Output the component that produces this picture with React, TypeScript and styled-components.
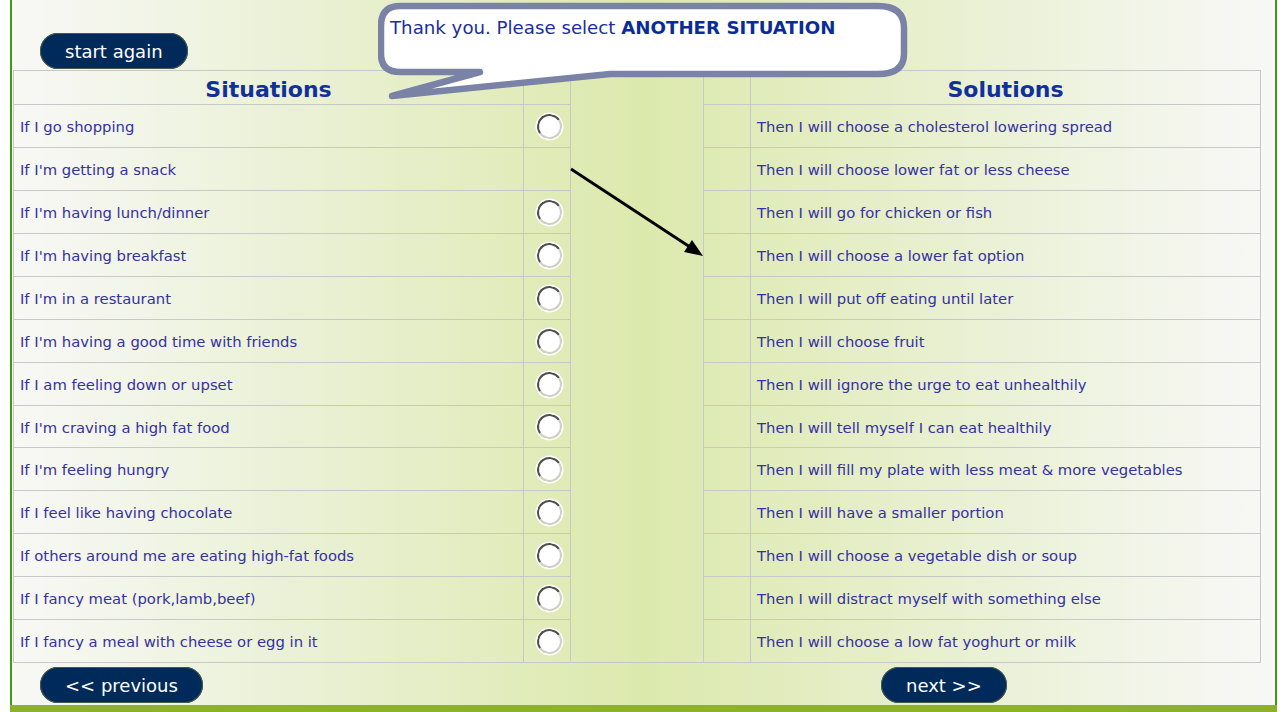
import React from "react";
import styled, { createGlobalStyle } from "styled-components";

const GlobalStyle = createGlobalStyle`
  html, body { margin: 0; padding: 0; background: #ffffff; }
  body { font-family: "DejaVu Sans", Verdana, sans-serif; }
`;

const Page = styled.div`
  width: 1267px;
  margin-left: 10px;
`;

const Frame = styled.div`
  position: relative;
  box-sizing: border-box;
  border-left: 2px solid #3d9a12;
  border-right: 2px solid #3d9a12;
  background: linear-gradient(to right, #f8f8f6 0%, #e9f0d2 25%, #dce9ad 50%, #e9f0d2 75%, #f8f8f7 100%);
  padding-top: 33px;
  height: 705px;
`;

const BottomBar = styled.div`
  height: 12px;
  background: #8db12a;
`;

const PillButton = styled.button`
  height: 36px;
  border: none;
  border-radius: 18px;
  background: #002a5a;
  color: #ffffff;
  font-family: "DejaVu Sans", Verdana, sans-serif;
  font-size: 18px;
  padding: 0 25px;
  cursor: pointer;
  box-shadow: 0 0 0 1px #4a5a4a inset;
  white-space: nowrap;
`;

const TopBar = styled.div`
  padding-left: 28px;
  height: 36px;
`;

const Grid = styled.div`
  margin-left: 1px;
  margin-top: 1px;
  display: grid;
  grid-template-columns: 510px 47px 133px 47px 510px;
  grid-template-rows: 34px repeat(7, 43px) 42px repeat(5, 43px);
  width: 1248px;
  box-sizing: border-box;
  border-top: 1px solid #c8c8c8;
  border-left: 1px solid #c8c8c8;
`;

const Cell = styled.div`
  box-sizing: border-box;
  border-right: 1px solid #c8c8c8;
  border-bottom: 1px solid #c8c8c8;
  display: flex;
  align-items: center;
`;

const HeadCell = styled(Cell)`
  justify-content: center;
  font-weight: bold;
  font-size: 22px;
  color: #10309c;
  padding-top: 3px;
`;

const TextCell = styled(Cell)`
  padding-left: 6px;
  padding-top: 1px;
  font-size: 14.8px;
  color: #3431a2;
  white-space: nowrap;
`;

const RadioCell = styled(Cell)`
  justify-content: center;
  padding-left: 4px;
`;

const Middle = styled.div`
  grid-column: 3;
  grid-row: 1 / -1;
  position: relative;
  box-sizing: border-box;
  border-right: 1px solid #c8c8c8;
  border-bottom: 1px solid #c8c8c8;
`;

const ArrowSvg = styled.svg`
  position: absolute;
  left: 0;
  top: 0;
  overflow: visible;
`;

const Radio = styled.span`
  display: block;
  width: 25px;
  height: 25px;
  box-sizing: border-box;
  border-radius: 50%;
  background: #ffffff;
  border: 2.5px solid;
  border-color: #4f4f4f #d2cfc6 #d2cfc6 #4f4f4f;
  transform: rotate(10deg);
  box-shadow: 0 0 0 1.5px #ffffff;
`;

const Footer = styled.div`
  display: grid;
  grid-template-columns: 869px auto;
  margin-top: 4px;
`;

const FooterLeft = styled.div`
  padding-left: 28px;
`;

const Bubble = styled.div`
  position: absolute;
  left: 366px;
  top: 0;
  width: 535px;
  height: 100px;
`;

const BubbleSvg = styled.svg`
  position: absolute;
  left: 0;
  top: 0;
`;

const BubbleText = styled.div`
  position: relative;
  padding: 17px 0 0 12px;
  font-size: 18.2px;
  color: #1a2e9c;
  white-space: nowrap;
  b { color: #0b2c98; }
`;

const situations = [
  "If I go shopping",
  "If I'm getting a snack",
  "If I'm having lunch/dinner",
  "If I'm having breakfast",
  "If I'm in a restaurant",
  "If I'm having a good time with friends",
  "If I am feeling down or upset",
  "If I'm craving a high fat food",
  "If I'm feeling hungry",
  "If I feel like having chocolate",
  "If others around me are eating high-fat foods",
  "If I fancy meat (pork,lamb,beef)",
  "If I fancy a meal with cheese or egg in it",
];

const solutions = [
  "Then I will choose a cholesterol lowering spread",
  "Then I will choose lower fat or less cheese",
  "Then I will go for chicken or fish",
  "Then I will choose a lower fat option",
  "Then I will put off eating until later",
  "Then I will choose fruit",
  "Then I will ignore the urge to eat unhealthily",
  "Then I will tell myself I can eat healthily",
  "Then I will fill my plate with less meat & more vegetables",
  "Then I will have a smaller portion",
  "Then I will choose a vegetable dish or soup",
  "Then I will distract myself with something else",
  "Then I will choose a low fat yoghurt or milk",
];

export default function App() {
  return (
    <>
      <GlobalStyle />
      <Page>
        <Frame>
          <TopBar>
            <PillButton>start again</PillButton>
          </TopBar>
          <Grid>
            <HeadCell style={{ gridColumn: 1, gridRow: 1 }}>Situations</HeadCell>
            <Cell style={{ gridColumn: 2, gridRow: 1 }} />
            <Middle>
              <ArrowSvg width="133" height="592">
                <line x1="0" y1="98" x2="122" y2="178" stroke="#000" strokeWidth="2.8" />
                <polygon points="132,185 113,181 121,169" fill="#000" />
              </ArrowSvg>
            </Middle>
            <Cell style={{ gridColumn: 4, gridRow: 1 }} />
            <HeadCell style={{ gridColumn: 5, gridRow: 1 }}>Solutions</HeadCell>
            {situations.map((s, i) => (
              <React.Fragment key={i}>
                <TextCell style={{ gridColumn: 1, gridRow: i + 2 }}>{s}</TextCell>
                <RadioCell style={{ gridColumn: 2, gridRow: i + 2 }}>
                  {i !== 1 && <Radio />}
                </RadioCell>
                <Cell style={{ gridColumn: 4, gridRow: i + 2 }} />
                <TextCell style={{ gridColumn: 5, gridRow: i + 2 }}>{solutions[i]}</TextCell>
              </React.Fragment>
            ))}
          </Grid>
          <Footer>
            <FooterLeft>
              <PillButton>&lt;&lt; previous</PillButton>
            </FooterLeft>
            <div>
              <PillButton>next &gt;&gt;</PillButton>
            </div>
          </Footer>
          <Bubble>
            <BubbleSvg width="535" height="100" viewBox="0 0 535 100">
              <path
                d="M 22 6 H 500 Q 526 6 526 28 V 54 Q 526 74 500 74 H 232 L 14 96 L 102 72 H 22 Q 3 72 3 54 V 26 Q 3 6 22 6 Z"
                fill="#ffffff"
                stroke="#7a83a6"
                strokeWidth="6.5"
                strokeLinejoin="round"
              />
            </BubbleSvg>
            <BubbleText>
              Thank you. Please select <b>ANOTHER SITUATION</b>
            </BubbleText>
          </Bubble>
        </Frame>
        <BottomBar />
      </Page>
    </>
  );
}
